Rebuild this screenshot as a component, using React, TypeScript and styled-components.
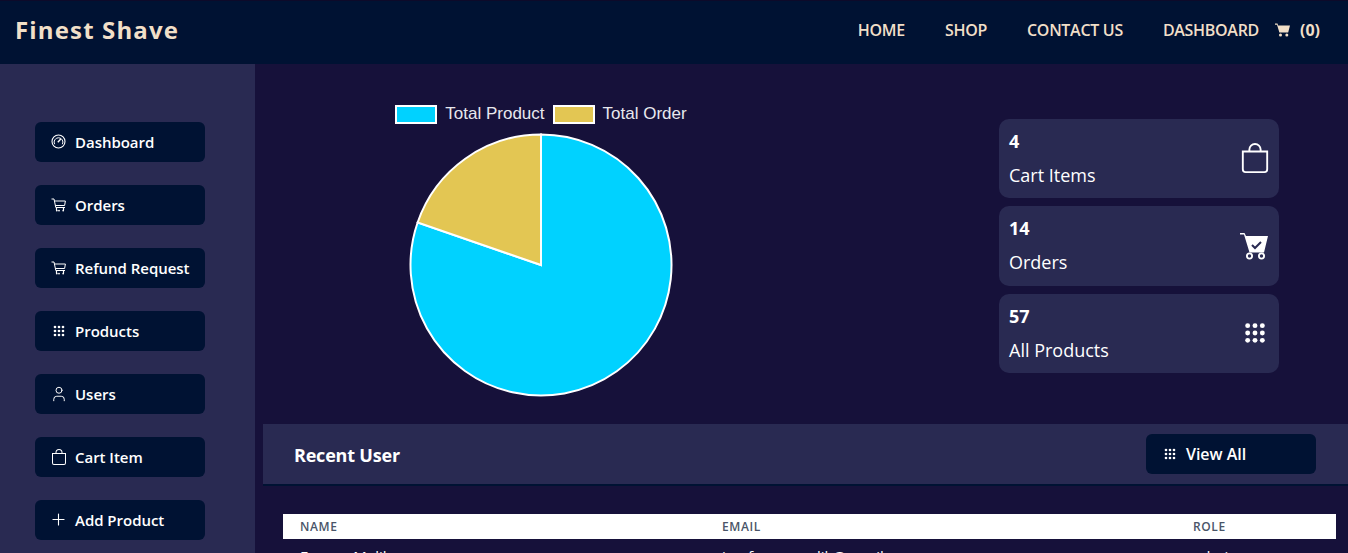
import React from 'react'
import styled, { createGlobalStyle } from 'styled-components'
import { User, Plus } from 'lucide-react'
import { BsBag } from 'react-icons/bs'

const GlobalStyle = createGlobalStyle`
  html, body {
    margin: 0;
    padding: 0;
    height: 100%;
    overflow: hidden;
    background: #16113a;
  }
  * {
    box-sizing: border-box;
  }
  body {
    font-family: "Open Sans", "Noto Sans", "Liberation Sans", sans-serif;
  }
`

const Page = styled.div`
  width: 1348px;
  height: 553px;
  overflow: hidden;
  display: flex;
  flex-direction: column;
`

const Header = styled.header`
  flex: none;
  height: 64px;
  border-top: 1px solid #0d0a2a;
  background: #001233;
  display: flex;
  align-items: center;
  justify-content: space-between;
  padding: 0 28px 5px 15px;
  color: #f1dfc8;
`

const Brand = styled.div`
  padding-bottom: 2px;
  font-size: 24px;
  font-weight: 700;
  letter-spacing: 1.15px;
`

const Nav = styled.nav`
  display: flex;
  align-items: center;
`

const NavLink = styled.a`
  font-size: 16px;
  font-weight: 600;
  letter-spacing: -0.3px;
  margin-left: 40px;
`

const CartLink = styled.div`
  display: flex;
  align-items: center;
  gap: 9px;
  margin-left: 16px;
  font-size: 16px;
  font-weight: 700;
`

const Body = styled.div`
  flex: 1;
  display: flex;
  min-height: 0;
`

const Sidebar = styled.aside`
  flex: none;
  width: 255px;
  background: #292a52;
  padding: 58px 35px 0;
  display: flex;
  flex-direction: column;
  gap: 23px;
`

const PillButton = styled.a`
  flex: none;
  display: flex;
  align-items: center;
  gap: 9px;
  width: 170px;
  height: 40px;
  padding: 0 0 1px 16px;
  background: #001233;
  border-radius: 6px;
  color: #fff;
  font-size: 15px;
  font-weight: 600;
  letter-spacing: -0.03px;
`

const ViewAllButton = styled(PillButton)`
  font-size: 16px;
`

const IconSlot = styled.span`
  width: 15px;
  height: 16px;
  display: flex;
  align-items: center;
  justify-content: center;
  flex: none;

  svg {
    flex: none;
  }
`

const Main = styled.main`
  flex: 1;
  min-width: 0;
  padding-left: 8px;
  display: flex;
  flex-direction: column;
`

const Overview = styled.section`
  flex: none;
  height: 360px;
  display: flex;
  justify-content: space-between;
  padding: 40px 69px 0 128px;
`

const ChartBox = styled.div`
  display: flex;
  flex-direction: column;
  align-items: center;
  width: 300px;
`

const Legend = styled.div`
  display: flex;
  gap: 8px;
  height: 20px;
  align-items: center;
  margin-bottom: 9px;
  color: #e8e8ee;
  font-family: "Liberation Sans", Arial, sans-serif;
  font-size: 17px;
  white-space: nowrap;
`

const LegendItem = styled.div`
  display: flex;
  align-items: center;
  gap: 8px;
`

const Swatch = styled.span<{ $color: string }>`
  width: 42px;
  height: 19px;
  background: ${({ $color }) => $color};
  border: 2px solid #fff;
`

const Stats = styled.div`
  width: 280px;
  margin-top: 15px;
  display: flex;
  flex-direction: column;
  gap: 8px;
`

const StatCard = styled.div<{ $height: number }>`
  height: ${({ $height }) => $height}px;
  background: #292a52;
  border-radius: 10px;
  color: #fff;
  display: flex;
  justify-content: space-between;
  align-items: center;
  padding: 0 9px 1px 10px;
`

const StatText = styled.div`
  display: flex;
  flex-direction: column;
  gap: 9px;
`

const StatValue = styled.div`
  font-size: 18px;
  line-height: 25px;
  font-weight: 700;
`

const StatLabel = styled.div`
  font-size: 18px;
  line-height: 25px;
`

const StatIcon = styled.div`
  width: 30px;
  display: flex;
  justify-content: center;
`

const RecentBar = styled.div`
  flex: none;
  height: 62px;
  background: #292a52;
  border-bottom: 2px solid #001233;
  display: flex;
  align-items: center;
  justify-content: space-between;
  padding: 0 32px 0 31px;
`

const RecentTitle = styled.h2`
  margin: 0;
  padding-top: 2px;
  color: #fff;
  font-size: 18px;
  font-weight: 700;
  letter-spacing: -0.2px;
`

const TableWrap = styled.div`
  padding: 28px 12px 0 20px;
`

const Table = styled.table`
  width: 100%;
  border-collapse: collapse;
  table-layout: fixed;
`

const HeadCell = styled.th<{ $width: number }>`
  width: ${({ $width }) => $width}px;
  height: 25px;
  padding: 0 0 0 17px;
  background: #fff;
  color: #4a5568;
  font-size: 12px;
  font-weight: 600;
  letter-spacing: 0.6px;
  text-align: left;
`

const Cell = styled.td`
  height: 34px;
  padding: 0 0 0 17px;
  color: #fff;
  font-size: 15px;
`

const Grid = ({ size, color = '#fff' }: { size: number; color?: string }) => {
  const step = size / 3
  const dots = [0, 1, 2].flatMap((row) => [0, 1, 2].map((col) => [col, row]))
  return (
    <svg width={size} height={size} viewBox={`0 0 ${size} ${size}`} fill={color}>
      {dots.map(([col, row]) => (
        <circle
          key={`${col}-${row}`}
          cx={step * col + step / 2}
          cy={step * row + step / 2}
          r={size / 9}
        />
      ))}
    </svg>
  )
}

const GaugeRing = () => (
  <svg width="15" height="15" viewBox="0 0 15 15" fill="none" stroke="#fff">
    <circle cx="7.5" cy="7.5" r="6.5" strokeWidth="1.1" />
    <path d="M3.6 10.2A4.4 4.4 0 1 1 11.4 10.2" strokeWidth="1" />
    <path d="M6.8 8.2L10 4.8" strokeWidth="1.4" />
  </svg>
)

const LineCart = () => (
  <svg width="15" height="14" viewBox="0 0 15 14" fill="none" stroke="#fff" strokeWidth="1">
    <path d="M0.5 1H3L4.8 9.5H14" />
    <path d="M3.4 3H14.4L13.6 7.5H4.4" />
    <path d="M5.5 9.5V12M12.5 9.5V12" strokeWidth="1.2" />
    <circle cx="5.8" cy="12.6" r="0.9" fill="#fff" stroke="none" />
    <circle cx="8" cy="12.6" r="0.9" fill="#fff" stroke="none" />
    <circle cx="12.2" cy="12.6" r="0.9" fill="#fff" stroke="none" />
  </svg>
)

const CartCheck = () => (
  <svg width="30" height="30" viewBox="0 0 30 30">
    <path d="M0 2h4.5l1.5 3h22l-4 16.5H9.5L4 3.6H0z" fill="#fff" />
    <path d="M12 14l3 3 6-6" fill="none" stroke="#292a52" strokeWidth="2" />
    <circle cx="9.5" cy="25" r="2.6" fill="none" stroke="#fff" strokeWidth="1.8" />
    <circle cx="21.5" cy="25" r="2.6" fill="none" stroke="#fff" strokeWidth="1.8" />
  </svg>
)

const SolidCart = () => (
  <svg width="16" height="16" viewBox="0 0 16 16" fill="#f1dfc8">
    <path d="M0 1.5h2.5l.6 2H15l-1.8 7H4.4L2 2.8H0z" />
    <circle cx="5.5" cy="13" r="1.5" />
    <circle cx="11.8" cy="13" r="1.5" />
  </svg>
)

const TOTAL_PRODUCT = 57
const TOTAL_ORDER = 14

const PieChart = () => {
  const size = 264
  const c = size / 2
  const r = 130.5
  // blue runs clockwise from 12 o'clock
  const angle = (TOTAL_PRODUCT / (TOTAL_PRODUCT + TOTAL_ORDER)) * 2 * Math.PI
  const x = c + r * Math.sin(angle)
  const y = c - r * Math.cos(angle)
  return (
    <svg width={size} height={size} viewBox={`0 0 ${size} ${size}`}>
      <path
        d={`M${c} ${c}L${c} ${c - r}A${r} ${r} 0 1 1 ${x} ${y}Z`}
        fill="#00d2ff"
        stroke="#fff"
        strokeWidth="2"
      />
      <path
        d={`M${c} ${c}L${x} ${y}A${r} ${r} 0 0 1 ${c} ${c - r}Z`}
        fill="#e3c653"
        stroke="#fff"
        strokeWidth="2"
      />
    </svg>
  )
}

const menu = [
  { label: 'Dashboard', icon: <GaugeRing /> },
  { label: 'Orders', icon: <LineCart /> },
  { label: 'Refund Request', icon: <LineCart /> },
  { label: 'Products', icon: <Grid size={12} /> },
  { label: 'Users', icon: <User size={18} strokeWidth={1.3} /> },
  { label: 'Cart Item', icon: <BsBag size={16} /> },
  { label: 'Add Product', icon: <Plus size={19} strokeWidth={1.4} /> },
]

const App = () => (
  <>
    <GlobalStyle />
    <Page>
      <Header>
        <Brand>Finest Shave</Brand>
        <Nav>
          <NavLink>HOME</NavLink>
          <NavLink>SHOP</NavLink>
          <NavLink>CONTACT US</NavLink>
          <NavLink>DASHBOARD</NavLink>
          <CartLink>
            <SolidCart />
            (0)
          </CartLink>
        </Nav>
      </Header>
      <Body>
        <Sidebar>
          {menu.map((item) => (
            <PillButton key={item.label}>
              <IconSlot>{item.icon}</IconSlot>
              {item.label}
            </PillButton>
          ))}
        </Sidebar>
        <Main>
          <Overview>
            <ChartBox>
              <Legend>
                <LegendItem>
                  <Swatch $color="#00d2ff" />
                  Total Product
                </LegendItem>
                <LegendItem>
                  <Swatch $color="#e3c653" />
                  Total Order
                </LegendItem>
              </Legend>
              <PieChart />
            </ChartBox>
            <Stats>
              <StatCard $height={79}>
                <StatText>
                  <StatValue>4</StatValue>
                  <StatLabel>Cart Items</StatLabel>
                </StatText>
                <StatIcon>
                  <BsBag size={30} />
                </StatIcon>
              </StatCard>
              <StatCard $height={80}>
                <StatText>
                  <StatValue>14</StatValue>
                  <StatLabel>Orders</StatLabel>
                </StatText>
                <StatIcon>
                  <CartCheck />
                </StatIcon>
              </StatCard>
              <StatCard $height={79}>
                <StatText>
                  <StatValue>57</StatValue>
                  <StatLabel>All Products</StatLabel>
                </StatText>
                <StatIcon>
                  <Grid size={22} />
                </StatIcon>
              </StatCard>
            </Stats>
          </Overview>
          <RecentBar>
            <RecentTitle>Recent User</RecentTitle>
            <ViewAllButton>
              <IconSlot>
                <Grid size={12} />
              </IconSlot>
              View All
            </ViewAllButton>
          </RecentBar>
          <TableWrap>
            <Table>
              <thead>
                <tr>
                  <HeadCell $width={422}>NAME</HeadCell>
                  <HeadCell $width={471}>EMAIL</HeadCell>
                  <HeadCell $width={160}>ROLE</HeadCell>
                </tr>
              </thead>
              <tbody>
                <tr>
                  <Cell>Farooq Malik</Cell>
                  <Cell>iamfarooqmalik@gmail.com</Cell>
                  <Cell>admin</Cell>
                </tr>
              </tbody>
            </Table>
          </TableWrap>
        </Main>
      </Body>
    </Page>
  </>
)

export default App
